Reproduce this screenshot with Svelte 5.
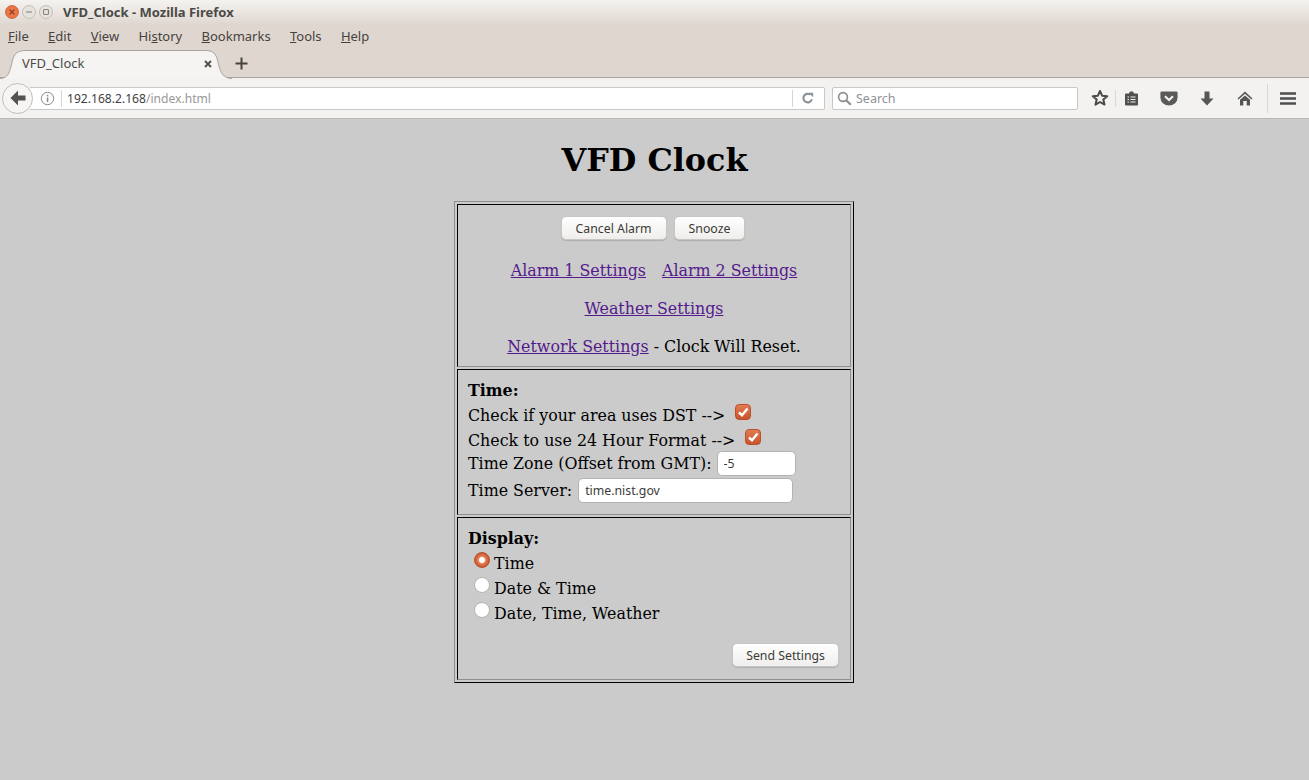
<script lang="ts">
	const menus = [
		{ pre: '', ul: 'F', post: 'ile' },
		{ pre: '', ul: 'E', post: 'dit' },
		{ pre: '', ul: 'V', post: 'iew' },
		{ pre: 'Hi', ul: 's', post: 'tory' },
		{ pre: '', ul: 'B', post: 'ookmarks' },
		{ pre: '', ul: 'T', post: 'ools' },
		{ pre: '', ul: 'H', post: 'elp' }
	];
</script>

<div class="browser">
	<header class="titlebar">
		<div class="winbtns">
			<span class="winbtn close">
				<svg width="8" height="8" viewBox="0 0 8 8"><path d="M1.5 1.5l5 5M6.5 1.5l-5 5" stroke="#8a3a1c" stroke-width="1.2" /></svg>
			</span>
			<span class="winbtn">
				<svg width="8" height="8" viewBox="0 0 8 8"><path d="M1 4h6" stroke="#8a8580" stroke-width="1.1" /></svg>
			</span>
			<span class="winbtn">
				<svg width="8" height="8" viewBox="0 0 8 8"><rect x="1.5" y="1.5" width="5" height="5" rx="1" fill="none" stroke="#8a8580" stroke-width="1.1" /></svg>
			</span>
		</div>
		<span class="wintitle">VFD_Clock - Mozilla Firefox</span>
	</header>

	<nav class="menubar">
		{#each menus as m}
			<span class="menu">{m.pre}<u>{m.ul}</u>{m.post}</span>
		{/each}
	</nav>

	<div class="tabstrip">
		<div class="tab">
			<svg class="tabshape" width="232" height="31" viewBox="0 0 232 31">
				<path d="M0 30.500C8 30.500 10 24 12 14 14 5 18 2.500 26 2.500H205C213 2.500 216 5 218 14 220 24 223 30.500 232 30.500" fill="#f5f4f2" stroke="#a9a49d" />
			</svg>
			<span class="tabtitle">VFD_Clock</span>
			<svg class="tabclose" width="8" height="8" viewBox="0 0 8 8"><path d="M1 1l6 6M7 1l-6 6" stroke="#55524e" stroke-width="2" /></svg>
		</div>
		<svg class="newtab" width="13" height="13" viewBox="0 0 13 13"><path d="M6.500 0.500v12M0.500 6.500h12" stroke="#45423f" stroke-width="2" /></svg>
	</div>

	<div class="navbar">
		<div class="backbtn">
			<svg width="16" height="16" viewBox="0 0 16 16"><path d="M8 0.500L0.500 8 8 15.500V10.500H15.500V5.500H8z" fill="#55524f" /></svg>
		</div>
		<div class="urlbar">
			<svg class="info" width="15" height="15" viewBox="0 0 15 15">
				<circle cx="7.500" cy="7.500" r="6.200" fill="none" stroke="#8a8a8a" />
				<rect x="6.800" y="6.500" width="1.500" height="4.500" fill="#8a8a8a" />
				<rect x="6.800" y="3.800" width="1.500" height="1.600" fill="#8a8a8a" />
			</svg>
			<span class="sep"></span>
			<span class="url">192.168.2.168<span class="urlpath">/index.html</span></span>
			<span class="sep right"></span>
			<svg class="reload" width="12" height="12" viewBox="0 0 14 14">
				<path d="M11.500 8.500A5 5 0 1 1 9.800 3.200" fill="none" stroke="#8b9299" stroke-width="2.400" />
				<path d="M7.800 0.800L13 1v5.200z" fill="#8b9299" />
			</svg>
		</div>
		<div class="searchbar">
			<svg width="15" height="15" viewBox="0 0 15 15">
				<circle cx="6" cy="6" r="4.400" fill="none" stroke="#8c8c8c" stroke-width="1.600" />
				<path d="M9.200 9.200L13.800 13.800" stroke="#8c8c8c" stroke-width="2" />
			</svg>
			<span>Search</span>
		</div>
		<div class="tools">
			<svg class="star" width="18" height="18" viewBox="0 0 18 18"><path d="M9 2l2.100 4.700 5.100.5-3.900 3.400 1.200 5L9 13l-4.500 2.600 1.200-5L1.800 7.200l5.100-.5z" fill="none" stroke="#4a4a4a" stroke-width="2" stroke-linejoin="round" /></svg>
			<span class="toolsep"></span>
			<svg class="reading" width="15" height="15" viewBox="0 0 15 15">
				<path d="M2 2.500H5L6 0.500H9L10 2.500H13A1 1 0 0 1 14 3.500V13.500A1 1 0 0 1 13 14.500H2A1 1 0 0 1 1 13.500V3.500A1 1 0 0 1 2 2.500z" fill="#505050" />
				<path d="M3.500 6h1.500M6.500 6h5M3.500 8.500h1.500M6.500 8.500h5M3.500 11h1.500M6.500 11h5" stroke="#f3f2f0" stroke-width="1.200" />
			</svg>
			<svg class="pocket" width="18" height="15" viewBox="0 0 18 15">
				<path d="M1.700 0.500H16.300A1.300 1.300 0 0 1 17.600 1.800V6.500A8.600 8 0 0 1 0.400 6.500V1.800A1.300 1.300 0 0 1 1.700 0.500z" fill="#5a5a5a" />
				<path d="M5 5.200L9 9 13 5.200" fill="none" stroke="#f3f2f0" stroke-width="2.200" />
			</svg>
			<svg class="download" width="14" height="15" viewBox="0 0 14 15"><path d="M4.500 0.500H9.500V7.500H13.500L7 14.500 0.500 7.500H4.500z" fill="#565656" /></svg>
			<svg class="home" width="16" height="15" viewBox="0 0 16 15">
				<path d="M8 0.500L15.500 7.500 14.500 8.500 8 2.800 1.500 8.500 0.500 7.500z" fill="#565656" />
				<path d="M8 4.500L13 8.800V14.500H9.700V10H6.300V14.500H3V8.800z" fill="#565656" />
			</svg>
			<span class="toolsep tall"></span>
			<svg class="burger" width="16" height="13" viewBox="0 0 16 13"><path d="M0 1.500h16M0 6.500h16M0 11.500h16" stroke="#4f4f4f" stroke-width="2.400" /></svg>
		</div>
	</div>

	<main class="page">
		<h1>VFD Clock</h1>
		<table>
			<tbody>
				<tr>
					<td class="top">
						<div class="btnrow">
							<button>Cancel Alarm</button>
							<button>Snooze</button>
						</div>
						<p><a href="#a1">Alarm 1 Settings</a><span class="linkgap"></span><a href="#a2">Alarm 2 Settings</a></p>
						<p><a href="#w">Weather Settings</a></p>
						<p><a href="#n">Network Settings</a> - Clock Will Reset.</p>
					</td>
				</tr>
				<tr>
					<td class="time">
						<b>Time:</b>
						<div class="line first">Check if your area uses DST --&gt;<span class="check"><svg width="12" height="12" viewBox="0 0 12 12"><path d="M2 6.500L5 9.300 10.500 2.500" fill="none" stroke="#fff" stroke-width="2.400" /></svg></span></div>
						<div class="line second">Check to use 24 Hour Format --&gt;<span class="check"><svg width="12" height="12" viewBox="0 0 12 12"><path d="M2 6.500L5 9.300 10.500 2.500" fill="none" stroke="#fff" stroke-width="2.400" /></svg></span></div>
						<div class="fieldline tz">Time Zone (Offset from GMT):<input value="-5" /></div>
						<div class="fieldline server">Time Server:<input value="time.nist.gov" /></div>
					</td>
				</tr>
				<tr>
					<td class="display">
						<b>Display:</b>
						<div class="radios">
							<div class="radio"><span class="dot on"></span>Time</div>
							<div class="radio"><span class="dot"></span>Date &amp; Time</div>
							<div class="radio"><span class="dot"></span>Date, Time, Weather</div>
						</div>
						<div class="sendrow"><button>Send Settings</button></div>
					</td>
				</tr>
			</tbody>
		</table>
	</main>
</div>

<style>
	:global(body) {
		margin: 0;
		background: #cbcbcb;
	}

	.browser {
		display: flex;
		flex-direction: column;
		height: 780px;
		overflow: hidden;
		font-family: 'Noto Sans', sans-serif;
		color: #3c3b37;
	}

	.titlebar {
		height: 24px;
		display: flex;
		align-items: center;
		background: linear-gradient(#f5f3f0, #dfd8d1);
	}

	.winbtns {
		display: flex;
		gap: 3px;
		padding-left: 5px;
		width: 63px;
		box-sizing: border-box;
	}

	.winbtn {
		width: 14px;
		height: 14px;
		box-sizing: border-box;
		border-radius: 50%;
		border: 1px solid #c4bfb9;
		background: #e6e2dd;
		display: flex;
		align-items: center;
		justify-content: center;
	}

	.winbtn.close {
		background: radial-gradient(circle, #f08a5f, #e8622f);
		border-color: #cf6a42;
	}

	.wintitle {
		font-size: 13px;
		font-weight: 700;
		color: #4c4a46;
	}

	.menubar {
		height: 24px;
		display: flex;
		align-items: center;
		gap: 19.3px;
		padding-left: 8px;
		background: #dfd6d0;
		font-size: 13px;
		color: #45433f;
	}

	.tabstrip {
		height: 30px;
		display: flex;
		align-items: flex-end;
		background: #dfd6d0;
		border-bottom: 1px solid #a9a49d;
		box-sizing: border-box;
	}

	.tab {
		position: relative;
		width: 235px;
		height: 30px;
		margin-bottom: -1px;
		flex: none;
	}

	.tabshape {
		position: absolute;
		left: 0;
		top: 0;
	}

	.tabtitle {
		position: absolute;
		left: 22px;
		top: 6px;
		font-size: 13px;
		color: #4a4a4a;
	}

	.tabclose {
		position: absolute;
		left: 204px;
		top: 12px;
	}

	.newtab {
		margin: 0 0 7px 0;
	}

	.navbar {
		height: 41px;
		display: flex;
		align-items: center;
		background: #f3f2f0;
		border-bottom: 1px solid #b9b8b6;
		box-sizing: border-box;
		padding-left: 2px;
	}

	.backbtn {
		position: relative;
		z-index: 1;
		width: 31px;
		height: 31px;
		box-sizing: border-box;
		border: 1px solid #c0bfbd;
		border-radius: 50%;
		background: #f6f5f3;
		display: flex;
		align-items: center;
		justify-content: center;
		flex: none;
	}

	.urlbar {
		width: 795px;
		height: 23px;
		margin-left: -3px;
		box-sizing: border-box;
		border: 1px solid #c9c8c6;
		border-left: 0;
		border-radius: 0 2px 2px 0;
		background: #fff;
		display: flex;
		align-items: center;
		flex: none;
		padding-left: 10px;
	}

	.info {
		flex: none;
	}

	.sep {
		width: 1px;
		height: 17px;
		background: #d6d5d3;
		margin: 0 5px 0 6px;
	}

	.sep.right {
		margin: 0 9px 0 auto;
	}

	.url {
		font-size: 12.1px;
		color: #3f3f3f;
	}

	.urlpath {
		color: #979797;
	}

	.reload {
		margin-right: 10px;
	}

	.searchbar {
		width: 246px;
		height: 23px;
		margin-left: 7px;
		box-sizing: border-box;
		border: 1px solid #c9c8c6;
		border-radius: 2px;
		background: #fff;
		display: flex;
		align-items: center;
		gap: 4px;
		padding-left: 4px;
		font-size: 12.500px;
		color: #8f9296;
		flex: none;
	}

	.tools {
		display: flex;
		align-items: center;
		height: 100%;
		margin-left: 13px;
	}

	.toolsep {
		width: 1px;
		height: 17px;
		background: #d9d8d6;
		margin: 0 8px 0 6px;
	}

	.toolsep.tall {
		height: 29px;
		margin: 0 12px 0 14px;
	}

	.pocket {
		margin-left: 21px;
	}

	.download {
		margin-left: 22px;
	}

	.home {
		margin-left: 23px;
	}

	.page {
		flex: 1;
		background: #cbcbcb;
		font-family: 'DejaVu Serif', serif;
		color: #000;
		font-size: 15.85px;
		line-height: 21px;
	}

	h1 {
		margin: 22px 0 22px;
		text-align: center;
		font-size: 31.8px;
		line-height: 38px;
		font-weight: 700;
	}

	table {
		width: 400px;
		margin: 0 0 0 454px;
		border-collapse: separate;
		border-spacing: 2px;
		border: 1px solid;
		border-color: #8e8e8e #000 #000 #8e8e8e;
	}

	td {
		border: 1px solid;
		border-color: #000 #8e8e8e #8e8e8e #000;
		padding: 0;
	}

	td.top {
		height: 161px;
		text-align: center;
		vertical-align: top;
	}

	.btnrow {
		display: flex;
		justify-content: center;
		gap: 7px;
		margin: 11px 0 20px;
		padding-right: 2px;
	}

	.btnrow button {
		padding: 0 14px;
	}

	button {
		height: 24px;
		padding: 0 13px;
		box-sizing: border-box;
		border: 1px solid #c8c6c3;
		border-radius: 5px;
		background: linear-gradient(#fff, #efeeec);
		box-shadow: 0 1px 1px rgba(0, 0, 0, 0.15);
		font-family: 'Noto Sans', sans-serif;
		font-size: 12.3px;
		color: #3c3b37;
	}

	p {
		margin: 0 0 17px;
	}

	p:last-child {
		margin: 0;
	}

	a {
		color: #551a8b;
	}

	.linkgap {
		display: inline-block;
		width: 16px;
	}

	td.time,
	td.display {
		vertical-align: top;
	}

	td.time {
		padding: 10px 10px 11px;
	}

	td.display {
		padding: 10px 10px 12px;
	}

	b {
		display: block;
		line-height: 21px;
	}

	.line {
		display: flex;
		align-items: flex-start;
		line-height: 25px;
		white-space: nowrap;
	}

	.line.first {
		height: 25px;
		margin-top: 2px;
	}

	.line.second {
		height: 23px;
	}

	.check {
		display: flex;
		align-items: center;
		justify-content: center;
		width: 16px;
		height: 16px;
		margin: 1px 0 0 10px;
		border-radius: 4px;
		background: linear-gradient(#e07b52, #c9532a);
		border: 1px solid #b9512c;
		box-sizing: border-box;
	}

	.fieldline {
		white-space: nowrap;
		display: flex;
		align-items: center;
	}

	input {
		box-sizing: border-box;
		height: 25px;
		padding: 0 6px;
		border: 1px solid #b5b3b0;
		border-radius: 5px;
		background: #fff;
		font-family: 'Noto Sans', sans-serif;
		font-size: 12.3px;
		color: #3c3b37;
		outline: none;
	}

	.tz input {
		width: 79px;
		margin-left: 5px;
	}

	.server {
		margin-top: 2px;
	}

	.server input {
		width: 215px;
		margin-left: 6px;
	}

	.radios {
		margin-top: 2px;
	}

	.radio {
		height: 25px;
		line-height: 25px;
		padding-left: 6px;
		display: flex;
		white-space: nowrap;
	}

	.dot {
		width: 16px;
		height: 16px;
		margin: 1px 4px 0 0;
		box-sizing: border-box;
		border-radius: 50%;
		background: #fff;
		border: 1px solid #b5b3b0;
		flex: none;
	}

	.dot.on {
		background: radial-gradient(circle, #fff 0 2.500px, #e58a63 3.500px, #c9532a 7px);
		border-color: #b9512c;
	}

	.sendrow {
		display: flex;
		justify-content: flex-end;
		margin-top: 17px;
		padding-right: 1px;
	}
</style>
